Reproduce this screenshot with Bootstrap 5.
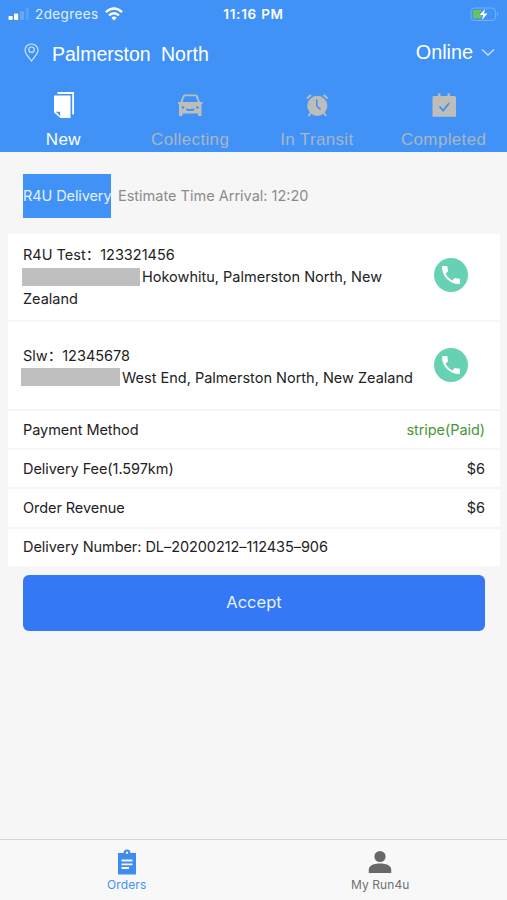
<!DOCTYPE html>
<html lang="en">
<head>
<meta charset="utf-8">
<meta name="viewport" content="width=device-width, initial-scale=1">
<title>Orders</title>
<link rel="stylesheet" href="https://cdn.jsdelivr.net/npm/bootstrap@5.3.0/dist/css/bootstrap.min.css">
<style>
body{font-family:Inter,"Noto Sans CJK SC",sans-serif;font-size:14.5px;line-height:22px;color:#222;background:#f6f6f7;height:900px;overflow:hidden}
svg{display:block;flex:none}
.app-head{background:#4192f7;height:152px;color:#fff}
.status{height:28px;font-size:13px;padding:0 8px;position:relative}
.status .carrier{font-size:13.5px;letter-spacing:.4px;margin:0 6px 0 6px;color:#e3f0ff}
.status .clock{font-weight:600;font-size:13.5px;letter-spacing:.75px;left:0;right:0;top:3px}
.place{height:52px;padding:0 12px 0 24px;font-family:"Liberation Sans",sans-serif;font-size:19.5px}
.place .town{margin-left:13px;word-spacing:5px}
.place .state{font-size:19.8px}
.tabs{height:72px;font-family:"Liberation Sans",sans-serif;font-size:17px;letter-spacing:.35px;color:#a9b6c4}
.tabs .tab{width:25%;padding-top:11px}
.tabs .tab svg{margin-bottom:10px}
.eta{height:44px;margin:22px 0 16px 23px;color:#8b8b8b}
.kind{background:#4192f7;color:#e6f1ff;width:88px;height:44px;line-height:44px;margin-right:7px;white-space:nowrap;letter-spacing:-.1px}
.order{margin:0 7px 0 8px}
.order>div{background:#fff;padding:0 15px;margin-bottom:2px}
.stop{height:86px}
.stop.drop{height:87px;padding-top:2px!important}
.line{height:37.2px;letter-spacing:-.06px}
.mask{display:inline-block;background:#bfbfbf;height:18px;vertical-align:-3.5px;margin-right:2px}
.call{width:34px;height:34px;border-radius:50%;background:#66d1b3;margin-right:17px}
.drop .call{margin-bottom:4px}
.paid{color:#48963a}
.accept{background:#3478f6;border:0;border-radius:6px;margin:9px 22px 0 23px;height:56px;font-size:16.5px;color:#e9f2ff}
.accept:hover{background:#2f6fe6;color:#fff}
.dock{height:61px;border-top:1px solid #d4d4d6;background:#f8f8f9;font-size:12px;line-height:16px;letter-spacing:.1px;color:#707070}
.dock svg{margin:8px 0 1px}
.dock .on{color:#4192f7}
.fit{white-space:nowrap}
</style>
<script src="https://cdn.jsdelivr.net/npm/bootstrap@5.3.0/dist/js/bootstrap.bundle.min.js"></script>
</head>
<body class="d-flex flex-column">
<header class="app-head">
  <div class="status d-flex align-items-center">
    <svg width="21" height="13" viewBox="0 0 21 13" fill="#fff"><rect x="0.5" y="8" width="4.2" height="4" rx="1"/><rect x="6" y="5.500" width="4.200" height="6.500" rx="1"/><rect x="12" y="3" width="4" height="9" rx="1" opacity=".2"/><rect x="17.500" y="0" width="4" height="12" rx="1" opacity=".12"/></svg>
    <span class="carrier">2degrees</span>
    <svg width="18" height="14" viewBox="0 0 18 14" fill="none" stroke="#fff" stroke-width="2.400"><path d="M.9 5.200Q9-2.200 17.100 5.200"/><path d="M4 8.400Q9 4 14 8.400"/><path d="M6.300 10.700Q9 8.300 11.700 10.700L9 13.400Z" fill="#fff" stroke="none"/></svg>
    <span class="clock position-absolute text-center">11:16 PM</span>
    <svg class="ms-auto" width="30" height="15" viewBox="0 0 30 15"><rect x="2" y="1" width="24.500" height="12.500" rx="3.500" fill="none" stroke="#74b0f8"/><path d="M28.200 5v4.500q2-2.200 0-4.500" fill="#82b7f8"/><path d="M5 3h8l-3 4.500h3l-1 4H5a1 1 0 0 1-1-1V4a1 1 0 0 1 1-1" fill="#66c45c"/><path d="M16 2l-5.500 6h3.500L13 13l5.500-6.500h-3.500z" fill="#fff"/></svg>
  </div>
  <div class="place d-flex align-items-center">
    <svg class="mb-1" width="15" height="19" viewBox="0 0 15 19" fill="none" stroke="#cce4ff" stroke-width="1.200"><path d="M7.500 18C5 14.500 1 10.800 1 7A6.500 6 0 0 1 14 7C14 10.800 10 14.500 7.500 18Z"/><circle cx="7.500" cy="6.700" r="2.700"/></svg>
    <span class="town fit">Palmerston North</span>
    <span class="state ms-auto mb-1">Online</span>
    <svg class="ms-2 mb-1" width="14" height="9" viewBox="0 0 14 9" fill="none" stroke="#cce4ff" stroke-width="1.300"><path d="M1 1.500l6 5.500 6-5.500"/></svg>
  </div>
  <nav class="tabs d-flex">
    <div class="tab d-flex flex-column align-items-center text-white">
      <svg width="28" height="28" viewBox="0 0 28 28" fill="#fff"><path d="M8.500 1H25V23.500H23.200V3H8.500z"/><path d="M5.500 4.500H21.500V27H11.500L5 21.500V5z"/><path d="M6.800 20.800H11.200V25z" fill="#4192f7"/></svg>
      <span>New</span></div>
    <div class="tab d-flex flex-column align-items-center">
      <svg width="28" height="28" viewBox="0 0 28 28" fill="#bdbdb9"><path d="M4.500 11L7 4.500Q7.500 3.500 9 3.500H19.500Q21 3.500 21.500 4.500L24 11H26.500V12.500L25.500 13.500V25H22V22.500H6.500V25H3V13.500L2 12.500V11z"/><path d="M6.500 11L8.700 5.200H19.800L22 11z" fill="#4192f7"/><circle cx="7" cy="16.500" r="1.300" fill="#4192f7"/><circle cx="21.500" cy="16.500" r="1.300" fill="#4192f7"/><path d="M10 17.200H11.500V18H17V17.200H18.500L17.500 20H11z" fill="#4192f7"/></svg>
      <span>Collecting</span></div>
    <div class="tab d-flex flex-column align-items-center">
      <svg width="28" height="28" viewBox="0 0 28 28" fill="#bdbdb9" stroke="#bdbdb9"><circle cx="14.300" cy="14.800" r="9.600"/><path d="M4 7.500L8 4M24.600 7.500L20.600 4" stroke-width="2"/><path d="M8 21.500L5.500 25M20.600 21.500L23.100 25" stroke-width="2"/><path d="M13.800 8.500V15L17.500 18.500" fill="none" stroke="#4192f7" stroke-width="1.600"/></svg>
      <span>In Transit</span></div>
    <div class="tab d-flex flex-column align-items-center">
      <svg width="28" height="28" viewBox="0 0 28 28" fill="#bdbdb9"><path d="M3.500 5H8V2.500H10.500V5H17.500V2.500H20V5H24.500Q26 5 26 6.500V25.800H2.500V6.500Q2.500 5 3.500 5z"/><path d="M9.500 15.500l3.700 4 6-7.500" fill="none" stroke="#4192f7" stroke-width="1.800"/></svg>
      <span>Completed</span></div>
  </nav>
</header>

<main>
  <div class="eta d-flex align-items-center">
    <span class="kind">R4U Delivery</span><span class="fit">Estimate Time Arrival: 12:20</span>
  </div>
  <section class="order">
    <div class="stop d-flex justify-content-between align-items-center">
      <div class="fit">R4U Test：123321456<br><span class="mask" style="width:118px;margin-left:-1px"></span>Hokowhitu, Palmerston North, New<br>Zealand</div>
      <a class="call mb-1 d-flex align-items-center justify-content-center" href="#" aria-label="Call sender"><svg width="24" height="24" viewBox="0 0 24 24" fill="#fff"><path d="M6.620 10.790c1.440 2.830 3.760 5.140 6.590 6.590l2.200-2.200c.27-.27.67-.36 1.020-.24 1.120.37 2.330.57 3.570.57.550 0 1 .45 1 1V20c0 .55-.45 1-1 1-9.390 0-17-7.610-17-17 0-.55.450-1 1-1h3.500c.55 0 1 .45 1 1 0 1.250.2 2.450.57 3.570.11.35.03.74-.25 1.020z"/></svg></a>
    </div>
    <div class="stop drop d-flex justify-content-between align-items-center">
      <div class="fit">Slw：12345678<br><span class="mask" style="width:99px;margin-left:-2px"></span>West End, Palmerston North, New Zealand</div>
      <a class="call d-flex align-items-center justify-content-center" href="#" aria-label="Call recipient"><svg width="24" height="24" viewBox="0 0 24 24" fill="#fff"><path d="M6.620 10.790c1.440 2.830 3.760 5.140 6.590 6.590l2.200-2.200c.27-.27.67-.36 1.020-.24 1.120.37 2.330.57 3.570.57.550 0 1 .45 1 1V20c0 .55-.45 1-1 1-9.390 0-17-7.610-17-17 0-.55.450-1 1-1h3.500c.55 0 1 .45 1 1 0 1.250.2 2.450.57 3.570.11.35.03.74-.25 1.020z"/></svg></a>
    </div>
    <div class="line d-flex justify-content-between align-items-center"><span>Payment Method</span><span class="paid">stripe(Paid)</span></div>
    <div class="line d-flex justify-content-between align-items-center"><span>Delivery Fee(1.597km)</span><span>$6</span></div>
    <div class="line d-flex justify-content-between align-items-center"><span>Order Revenue</span><span>$6</span></div>
    <div class="line d-flex align-items-center mb-0"><span>Delivery Number: DL–20200212–112435–906</span></div>
  </section>
  <div class="d-grid"><button class="btn accept" type="button">Accept</button></div>
</main>

<nav class="dock d-flex mt-auto">
  <div class="w-50 d-flex flex-column align-items-center on">
    <svg width="20" height="28" viewBox="0 0 20 28" fill="#3d8cf0"><path fill-rule="evenodd" d="M1 5H6.500A3.500 3.500 0 0 1 13.500 5H19V26.500H1zM10 3.500a1.200 1.200 0 1 0 .01 0z"/><path d="M4.500 12.500h11M4.500 16.300h11M4.500 20h7.500" stroke="#f8f8f9" stroke-width="1.800"/></svg>
    <span>Orders</span></div>
  <div class="w-50 d-flex flex-column align-items-center">
    <svg width="24" height="28" viewBox="0 0 24 28" fill="#686868"><circle cx="12" cy="8.500" r="5.600"/><path d="M.8 25V21.500C.8 17.500 6 15.500 12 15.500S23.200 17.500 23.200 21.500V25z"/></svg>
    <span>My Run4u</span></div>
</nav>
</body>
</html>
